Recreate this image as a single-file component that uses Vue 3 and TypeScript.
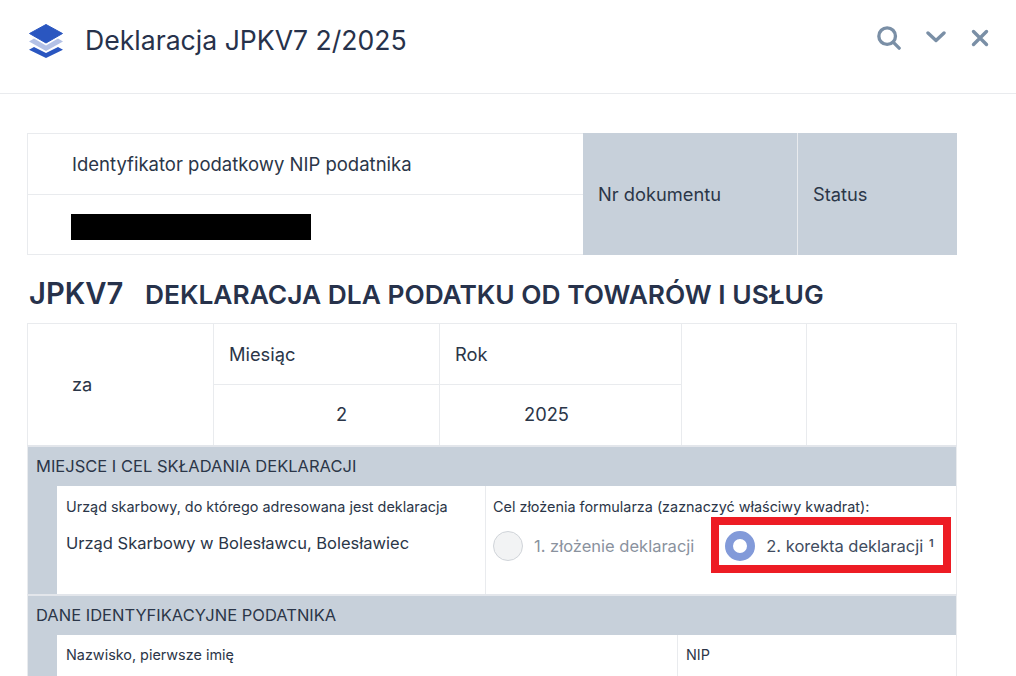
<script setup lang="ts">
const title: string = 'Deklaracja JPKV7 2/2025'
</script>

<template>
  <div class="page">
    <header class="topbar">
      <div class="brand">
        <svg class="logo" width="36" height="36" viewBox="0 0 36 36">
          <path d="M18 1.500 34.500 10.500 18 20 1.500 10.500Z" fill="#2a56c0" stroke="#2a56c0" stroke-width="1" stroke-linejoin="round" />
          <path d="M6 15.500 18 22.500l12-7 5 3-17 9.500-17-9.500Z" fill="#b3c1e6" />
          <path d="M6 24 18 30l12-6 5 2.800-17 8.200-17-8.200Z" fill="#2a56c0" />
        </svg>
        <h1>{{ title }}</h1>
      </div>
      <div class="actions">
        <svg width="24" height="24" viewBox="0 0 26 26" fill="none" stroke="#7a8fa6" stroke-width="3.600" stroke-linecap="round">
          <circle cx="11" cy="11" r="9" />
          <path d="M17.800 17.800 24 24" />
        </svg>
        <svg width="20" height="14" viewBox="0 0 20 14" fill="none" stroke="#7a8fa6" stroke-width="3.400" stroke-linecap="round" stroke-linejoin="round">
          <path d="M2 3 10 10.500 18 3" />
        </svg>
        <svg width="18" height="18" viewBox="0 0 18 18" fill="none" stroke="#7a8fa6" stroke-width="3.400" stroke-linecap="round">
          <path d="M2.500 2.500 15.500 15.500M15.500 2.500 2.500 15.500" />
        </svg>
      </div>
    </header>

    <main class="content">
      <section class="id-table">
        <div class="id-left">
          <div class="id-label">Identyfikator podatkowy NIP podatnika</div>
          <div class="id-value"><span class="redacted"></span></div>
        </div>
        <div class="gray-cell doc">Nr dokumentu</div>
        <div class="gray-cell status">Status</div>
      </section>

      <div class="heading">
        <span class="code">JPKV7</span>
        <span class="decl">DEKLARACJA DLA PODATKU OD TOWARÓW I USŁUG</span>
      </div>

      <section class="period">
        <div class="p-za">za</div>
        <div class="p-col month">
          <div class="p-head">Miesiąc</div>
          <div class="p-val">2</div>
        </div>
        <div class="p-col year">
          <div class="p-head">Rok</div>
          <div class="p-val">2025</div>
        </div>
        <div class="p-empty e1"></div>
        <div class="p-empty e2"></div>
      </section>

      <section class="block first">
        <div class="block-title">MIEJSCE I CEL SKŁADANIA DEKLARACJI</div>
        <div class="block-body place">
          <div class="cell office">
            <div class="small">Urząd skarbowy, do którego adresowana jest deklaracja</div>
            <div class="office-name">Urząd Skarbowy w Bolesławcu, Bolesławiec</div>
          </div>
          <div class="cell purpose">
            <div class="small">Cel złożenia formularza (zaznaczyć właściwy kwadrat):</div>
            <div class="options">
              <div class="option disabled">
                <span class="radio-off"></span>
                <span>1. złożenie deklaracji</span>
              </div>
              <div class="option selected">
                <span class="radio-on"></span>
                <span>2. korekta deklaracji <sup>1</sup></span>
                <span class="highlight"></span>
              </div>
            </div>
          </div>
        </div>
      </section>

      <section class="block">
        <div class="block-title second">DANE IDENTYFIKACYJNE PODATNIKA</div>
        <div class="block-body person">
          <div class="cell name"><div class="small">Nazwisko, pierwsze imię</div></div>
          <div class="cell nip"><div class="small">NIP</div></div>
        </div>
      </section>
    </main>
  </div>
</template>

<style>
html, body { margin: 0; background: #fff; overflow: hidden; }
</style>

<style scoped>
.page {
  width: 1016px;
  height: 676px;
  overflow: hidden;
  font-family: Inter, "Liberation Sans", sans-serif;
  color: #2b3648;
  background: #fff;
}
.topbar {
  box-sizing: border-box;
  height: 94px;
  border-bottom: 1px solid #e9ebee;
  display: flex;
  justify-content: space-between;
  padding: 23px 27px 0 28px;
}
.brand { display: flex; align-items: flex-start; gap: 21px; }
.logo { display: block; }
h1 {
  margin: -1px 0 0;
  font-size: 26.600px;
  line-height: 36px;
  font-weight: 400;
  color: #27324b;
}
.actions { display: flex; align-items: flex-start; gap: 25px; }
.actions svg:nth-child(1) { margin-top: 3px; }
.actions svg:nth-child(2) { margin-top: 7px; }
.actions svg:nth-child(3) { margin-top: 6px; }

.content { padding: 39px 59px 0 27px; }

.id-table {
  display: grid;
  grid-template-columns: 556px 215px 159px;
  height: 122px;
}
.id-left {
  box-sizing: border-box;
  border: 1px solid #e9ebee;
  border-right: 0;
  display: grid;
  grid-template-rows: 61px 1fr;
}
.id-label {
  padding: 20px 0 0 44px;
  font-size: 18.500px;
  line-height: 20px;
  border-bottom: 1px solid #e9ebee;
}
.id-value { padding: 19px 0 0 43px; }
.redacted { display: block; width: 240px; height: 26px; background: #000; }
.gray-cell {
  background: #c7d0da;
  display: flex;
  align-items: center;
  padding-left: 15px;
  font-size: 18.300px;
}
.doc { border-right: 1px solid #e9ebee; }

.heading {
  display: flex;
  align-items: baseline;
  height: 68px;
  box-sizing: border-box;
  padding: 23px 0 0 2px;
  color: #27324b;
  font-weight: 600;
}
.code { font-size: 29.200px; line-height: 32px; width: 116px; }
.decl { font-size: 26.330px; line-height: 32px; white-space: nowrap; }

.period {
  display: grid;
  grid-template-columns: 186px 226px 242px 125px 151px;
  height: 122px;
  box-sizing: border-box;
  border: 1px solid #e9ebee;
  border-bottom: 0;
  font-size: 18.300px;
}
.period > div { border-right: 1px solid #e9ebee; }
.period > div:last-child { border-right: 0; }
.p-za { padding: 50px 0 0 44px; line-height: 20px; }
.p-col { display: grid; grid-template-rows: 61px 1fr; }
.p-head { padding: 20px 0 0 15px; line-height: 20px; border-bottom: 1px solid #e9ebee; }
.p-val { padding-top: 19px; line-height: 20px; }
.month .p-val { padding-left: 122px; }
.year .p-val { padding-left: 84px; }

.block {
  background: #c7d0da;
  border-left: 1px solid #e9ebee;
  border-right: 1px solid #e9ebee;
  border-top: 2px solid #e3e6eb;
}
.block-title {
  height: 39px;
  box-sizing: border-box;
  padding: 9px 0 0 8px;
  font-size: 16.500px;
  line-height: 20px;
}
.block-body {
  margin-left: 29px;
  background: #fff;
  display: grid;
}
.place { grid-template-columns: 429px 470px; height: 108px; }
.person { grid-template-columns: 621px 278px; height: 60px; }
.cell { box-sizing: border-box; padding: 12px 8px 0; }
.office, .name { border-right: 1px solid #e9ebee; padding-left: 9px; }
.purpose { padding-left: 7px; }
.person .cell { padding-top: 11px; }
.small { font-size: 14.400px; line-height: 18px; white-space: nowrap; }
.office-name { margin-top: 17px; font-size: 16.500px; line-height: 20px; white-space: nowrap; }
.options { display: flex; align-items: center; gap: 31px; margin-top: 15px; }
.option { position: relative; display: flex; align-items: center; gap: 11px; font-size: 16.500px; line-height: 30px; white-space: nowrap; }
.option.disabled { color: #8a929e; }
.option.selected { color: #3f4c60; gap: 11px; }
.radio-off {
  box-sizing: border-box;
  width: 30px;
  height: 30px;
  border-radius: 50%;
  background: #f2f3f4;
  border: 1px solid #d0d4d9;
}
.radio-on {
  box-sizing: border-box;
  width: 30px;
  height: 30px;
  border-radius: 50%;
  border: 8px solid #829ad9;
  background: #fff;
}
sup { font-size: 11px; line-height: 0; vertical-align: 5px; margin-left: 1px; font-weight: 600; }
.highlight {
  position: absolute;
  left: -14px;
  top: -14px;
  width: 240px;
  height: 56px;
  box-sizing: border-box;
  border: 8px solid #ed1c24;
  pointer-events: none;
}
</style>
